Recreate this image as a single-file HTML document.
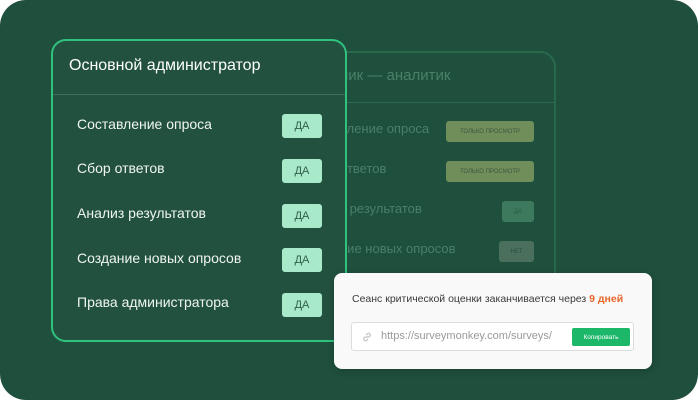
<!DOCTYPE html>
<html><head><meta charset="utf-8"><style>
*{margin:0;padding:0;box-sizing:border-box}
body{width:698px;height:400px;background:#fff;font-family:"Liberation Sans","Noto Sans CJK SC",sans-serif;overflow:hidden;position:relative}
.bg{position:absolute;left:0;top:0;width:698px;height:400px;background:#1f4f3d;border-radius:26px}
.back{position:absolute;left:300px;top:51px;width:256px;height:260px;border:2px solid #2a684c;border-radius:16px}
.back .hd{position:absolute;left:0;right:0;top:0;height:50px;border-bottom:1.5px solid #2b6a4d}
.back .t{position:absolute;color:#4a8068;font-size:13px;white-space:nowrap}
.bb{position:absolute;height:21px;border-radius:3px;font-size:6px;color:#3a5a40;display:flex;align-items:center;justify-content:center}
.main{position:absolute;left:51px;top:39px;width:296px;height:303px;background:#22523f;border:2.5px solid #2ec27c;border-radius:15px}
.main .hd{position:absolute;left:0;right:0;top:0;height:54px;border-bottom:1px solid #3f6e5a;color:#fff;font-size:16px;padding:16px 0 0 16px}
.row{position:absolute;left:24px;color:#f0f5f2;font-size:14px}
.b{position:absolute;left:229px;width:40px;height:24px;background:#a8e9c9;border-radius:3px;color:#2f5f48;font-size:11px;display:flex;align-items:center;justify-content:center}
.pop{position:absolute;left:334px;top:273px;width:318px;height:96px;background:#f9f9f9;border-radius:8px;box-shadow:0 2px 8px rgba(0,0,0,.2)}
.pop .m{position:absolute;left:18px;top:20px;font-size:10.5px;color:#3a3a3a;white-space:nowrap}
.pop .m b{color:#e8662a}
.inp{position:absolute;left:17px;top:49px;width:283px;height:29px;border:1px solid #dcdcdc;border-radius:3px;background:#fff}
.inp .u{position:absolute;left:29px;top:7px;font-size:11px;color:#9a9a9a}
.btn{position:absolute;left:220px;top:5px;width:58px;height:18px;background:#1db76a;border-radius:2px;color:#fff;font-size:6.5px;display:flex;align-items:center;justify-content:center}
</style></head><body>
<div class="bg"></div>
<div class="back">
<div class="hd"></div>
<div class="t" style="left:38px;top:14px;font-size:15px">ник — аналитик</div>
<div class="t" style="left:38px;top:68px">вление опроса</div>
<div class="t" style="left:38px;top:108px">ответов</div>
<div class="t" style="left:38px;top:148px">з результатов</div>
<div class="t" style="left:38px;top:188px">ние новых опросов</div>
<div class="bb" style="left:144px;top:68px;width:88px;background:#6f8e5a">ТОЛЬКО ПРОСМОТР</div>
<div class="bb" style="left:144px;top:108px;width:88px;background:#6f8e5a">ТОЛЬКО ПРОСМОТР</div>
<div class="bb" style="left:200px;top:148px;width:32px;background:#3d7a5d;color:#2c5a44">ДА</div>
<div class="bb" style="left:197px;top:188px;width:35px;background:#4b6f5d;color:#2f4d40">НЕТ</div>
</div>
<div class="main">
<div class="hd">Основной администратор</div>
<div class="row" style="top:75px">Составление опроса</div><div class="b" style="top:73px">ДА</div>
<div class="row" style="top:119px">Сбор ответов</div><div class="b" style="top:118px">ДА</div>
<div class="row" style="top:164px">Анализ результатов</div><div class="b" style="top:163px">ДА</div>
<div class="row" style="top:209px">Создание новых опросов</div><div class="b" style="top:207px">ДА</div>
<div class="row" style="top:253px">Права администратора</div><div class="b" style="top:252px">ДА</div>
</div>
<div class="pop">
<div class="m">Сеанс критической оценки заканчивается через <b>9 дней</b></div>
<div class="inp">
<svg style="position:absolute;left:9px;top:8px" width="12" height="12" viewBox="0 0 12 12" fill="none" stroke="#c8c8c8" stroke-width="1.3"><path d="M5 7l2-2M4.5 5.5l-1.5 1.5a1.8 1.8 0 0 0 2.5 2.5L7 8M7.5 6.5L9 5a1.8 1.8 0 0 0-2.5-2.5L5 4"/></svg>
<div class="u">https://surveymonkey.com/surveys/</div>
<div class="btn">Копировать</div>
</div>
</div>
</body></html>
